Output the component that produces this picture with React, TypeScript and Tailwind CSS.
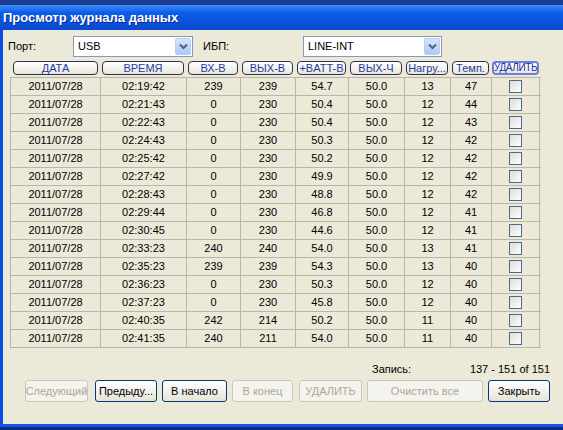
import React from 'react';

const cols = [90, 86, 54, 55, 53, 56, 46, 41, 49];
const headers = ['ДАТА', 'ВРЕМЯ', 'ВХ-В', 'ВЫХ-В', '+BATT-B', 'ВЫХ-Ч', 'Нагру...', 'Темп.', 'УДАЛИТЬ'];

const rows: string[][] = [
  ['02:19:42', '239', '239', '54.7', '13', '47'],
  ['02:21:43', '0', '230', '50.4', '12', '44'],
  ['02:22:43', '0', '230', '50.4', '12', '43'],
  ['02:24:43', '0', '230', '50.3', '12', '42'],
  ['02:25:42', '0', '230', '50.2', '12', '42'],
  ['02:27:42', '0', '230', '49.9', '12', '42'],
  ['02:28:43', '0', '230', '48.8', '12', '42'],
  ['02:29:44', '0', '230', '46.8', '12', '41'],
  ['02:30:45', '0', '230', '44.6', '12', '41'],
  ['02:33:23', '240', '240', '54.0', '13', '41'],
  ['02:35:23', '239', '239', '54.3', '13', '40'],
  ['02:36:23', '0', '230', '50.3', '12', '40'],
  ['02:37:23', '0', '230', '45.8', '12', '40'],
  ['02:40:35', '242', '214', '50.2', '11', '40'],
  ['02:41:35', '240', '211', '54.0', '11', '40'],
];

function Combo({ value, width }: { value: string; width: string }) {
  return (
    <div className={`${width} h-[21px] flex items-stretch border border-[#7f9db9] bg-white p-[1px]`}>
      <div className="flex-1 flex items-center pl-[3px] text-[11px] text-black">{value}</div>
      <div className="w-[16px] rounded-[2px] border border-[#b8cef5] bg-linear-to-b from-[#d6e3fd] to-[#aec8f7] flex items-center justify-center">
        <svg width="9" height="7" viewBox="0 0 9 7">
          <path d="M1 1.5 L4.5 5 L8 1.5" fill="none" stroke="#4d6185" strokeWidth="2" />
        </svg>
      </div>
    </div>
  );
}

function Btn({ label, width, disabled }: { label: string; width: string; disabled?: boolean }) {
  return (
    <div
      className={`${width} h-[22px] rounded-[3px] border flex items-center justify-center overflow-hidden whitespace-nowrap text-[11px] ${
        disabled
          ? 'border-[#c9c7ba] bg-[#f4f3ee] text-[#aca899]'
          : 'border-[#003c74] bg-linear-to-b from-white to-[#e6e3d8] text-black'
      }`}
    >
      {label}
    </div>
  );
}

function Check() {
  return <div className="w-[13px] h-[13px] border border-[#4a6a8e] bg-linear-to-br from-[#dcdcd7] to-white" />;
}

export default function App() {
  return (
    <div
      className="w-[563px] h-[430px] overflow-hidden flex flex-col bg-[#ece9d8]"
      style={{ fontFamily: '"Liberation Sans", Arial, sans-serif' }}
    >
      {/* window behind */}
      <div className="h-[5px] bg-[#1a3d92]" />
      {/* title bar */}
      <div className="h-[25px] flex items-center pl-[3px] bg-linear-to-b from-[#3d8cf6] via-[#0b5eea] via-30% to-[#0949cf]">
        <span className="text-white font-bold text-[13px] [text-shadow:1px_1px_0_#0a2a8a]">Просмотр журнала данных</span>
      </div>

      <div className="flex-1 flex">
        <div className="w-[3px] bg-[#0a4be0]" />
        <div className="flex-1 flex flex-col text-[11px] text-black">
          {/* port row */}
          <div className="flex items-center pt-[6px] pl-[5px]">
            <span className="w-[65px]">Порт:</span>
            <Combo value="USB" width="w-[120px]" />
            <span className="ml-[10px] w-[100px]">ИБП:</span>
            <Combo value="LINE-INT" width="w-[139px]" />
          </div>

          {/* table */}
          <div className="ml-[7px] mt-[3px] w-[531px]">
            <div className="flex h-[17px]">
              {headers.map((h, i) => (
                <div
                  key={h}
                  style={{ width: cols[i] }}
                  className={`pt-[1px] ${i === 0 ? 'pl-[3px] pr-[2px]' : i === 8 ? 'px-[1px]' : 'px-[2px]'}`}
                >
                  <div
                    className={`h-[14px] rounded-[4px] flex items-center justify-center whitespace-nowrap leading-none bg-linear-to-b from-white to-[#e8e6dc] ${
                      i === 8
                        ? 'border-2 border-[#6d7fe0] text-[#1c2fa8] text-[10px] tracking-[-0.4px]'
                        : 'border border-[#2c3350] text-[#1f3ca6] overflow-hidden'
                    }`}
                  >
                    {h}
                  </div>
                </div>
              ))}
            </div>
            <div className="border-t border-[#b9b6a7]">
              {rows.map((r, ri) => {
                const cells = ['2011/07/28', r[0], r[1], r[2], r[3], '50.0', r[4], r[5]];
                return (
                  <div key={ri} className="flex h-[18px] border-b border-[#b9b6a7]">
                    {cells.map((c, ci) => (
                      <div
                        key={ci}
                        style={{ width: cols[ci] }}
                        className="border-l border-[#b9b6a7] flex items-center justify-center"
                      >
                        {c}
                      </div>
                    ))}
                    <div
                      style={{ width: cols[8] }}
                      className="border-l border-r border-[#b9b6a7] flex items-center justify-center"
                    >
                      <Check />
                    </div>
                  </div>
                );
              })}
            </div>
          </div>

          {/* status */}
          <div className="flex h-[14px] mt-[14px] w-[547px] items-center">
            <span className="ml-[369px]">Запись:</span>
            <span className="flex-1 text-right">137 - 151 of 151</span>
          </div>

          {/* buttons */}
          <div className="flex mt-[4px] pl-[22px]">
            <Btn label="Следующий" width="w-[63px]" disabled />
            <div className="ml-[7px]">
              <Btn label="Предыду..." width="w-[62px]" />
            </div>
            <div className="ml-[5px]">
              <Btn label="В начало" width="w-[65px]" />
            </div>
            <div className="ml-[5px]">
              <Btn label="В конец" width="w-[61px]" disabled />
            </div>
            <div className="ml-[6px]">
              <Btn label="УДАЛИТЬ" width="w-[63px]" disabled />
            </div>
            <div className="ml-[5px]">
              <Btn label="Очистить все" width="w-[116px]" disabled />
            </div>
            <div className="ml-[5px]">
              <Btn label="Закрыть" width="w-[62px]" />
            </div>
          </div>
        </div>
      </div>

      <div className="h-[3px] bg-[#1652e6]" />
      <div className="h-[3px] bg-[#0c2b82]" />
    </div>
  );
}
